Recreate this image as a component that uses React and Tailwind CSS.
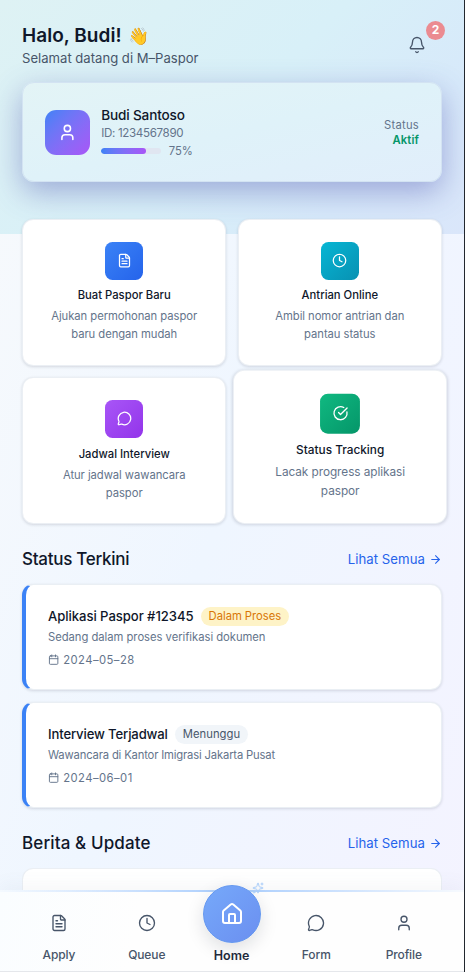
import {
  ArrowRight, Bell, Calendar, CircleCheckBig, Clock, FileText, House, MessageCircle, Sparkles, User,
} from 'lucide-react';

const actions = [
  { title: 'Buat Paspor Baru', lines: ['Ajukan permohonan paspor', 'baru dengan mudah'], icon: FileText, tile: 'from-[#3b82f6] to-[#2563eb]', card: '', gap: 'mt-[7px]' },
  { title: 'Antrian Online', lines: ['Ambil nomor antrian dan', 'pantau status'], icon: Clock, tile: 'from-[#06b6d4] to-[#0891b2]', card: '', gap: 'mt-[7px]' },
  { title: 'Jadwal Interview', lines: ['Atur jadwal wawancara', 'paspor'], icon: MessageCircle, tile: 'from-[#a855f7] to-[#9333ea]', card: '', gap: 'mt-[8px]' },
  { title: 'Status Tracking', lines: ['Lacak progress aplikasi', 'paspor'], icon: CircleCheckBig, tile: 'from-[#10b981] to-[#059669]', card: '-translate-y-[3.75px] scale-105', gap: 'mt-[7px]' },
];

const updates = [
  { title: 'Aplikasi Paspor #12345', titleStyle: 'tracking-[-0.004em]', badge: 'Dalam Proses', badgeStyle: 'bg-[#fef3c7] text-[#d97706] tracking-[-0.003em]', text: 'Sedang dalam proses verifikasi dokumen', textStyle: 'tracking-[-0.003em]', date: '2024–05–28' },
  { title: 'Interview Terjadwal', titleStyle: 'tracking-[-0.01em]', badge: 'Menunggu', badgeStyle: 'bg-[#f1f5f9] text-[#475569] tracking-[0.002em]', text: 'Wawancara di Kantor Imigrasi Jakarta Pusat', textStyle: 'tracking-[-0.015em]', date: '2024–06–01' },
];

function ActionCard({ item }) {
  const Icon = item.icon;
  return (
    <div className={`flex h-[146.5px] flex-col items-center rounded-[11.25px] border border-[#e2e8f0]/70 bg-white pt-[22px] shadow-[0_1px_3px_rgba(15,23,42,0.14)] ${item.card}`}>
      <div className={`flex size-[37.5px] items-center justify-center rounded-[7.5px] bg-linear-to-br ${item.tile}`}>
        <Icon className="size-[15px] text-white" strokeWidth={2} />
      </div>
      <h3 className={`text-[11.25px] leading-[17px] font-[450] text-[#0f172a] ${item.gap}`}>{item.title}</h3>
      <p className="mt-[3px] text-center text-[11.25px] leading-[18.3px] tracking-[-0.005em] text-[#64748b]">
        {item.lines[0]}<br />{item.lines[1]}
      </p>
    </div>
  );
}

function SectionHeader({ title, titleStyle }) {
  return (
    <div className="flex h-[27px] items-center justify-between">
      <h2 className={`text-[17px] font-medium text-[#0f172a] ${titleStyle}`}>{title}</h2>
      <button className="flex items-center gap-[4px] text-[13.2px] tracking-[0.004em] text-[#2563eb]">
        Lihat Semua <ArrowRight className="size-[13px]" />
      </button>
    </div>
  );
}

function UpdateCard({ item }) {
  return (
    <div className="h-[106px] rounded-[11.25px] border border-l-4 border-[#e2e8f0]/70 border-l-[#3b82f6] bg-white pt-[21px] pl-[22px] shadow-[0_1px_3px_rgba(15,23,42,0.14)]">
      <div className="flex h-[21px] items-center gap-[7.5px]">
        <h3 className={`text-[13.1px] font-[470] text-[#0f172a] ${item.titleStyle}`}>{item.title}</h3>
        <span className={`flex h-[18.5px] items-center rounded-full px-[7.5px] text-[11.25px] ${item.badgeStyle}`}>{item.badge}</span>
      </div>
      <p className={`mt-[2px] text-[11.25px] leading-[17px] text-[#64748b] ${item.textStyle}`}>{item.text}</p>
      <div className="mt-[6px] flex items-center gap-[4px] text-[11.25px] leading-[17px] tracking-[0.04em] text-[#64748b]">
        <Calendar className="-mt-px size-[11.25px]" />{item.date}
      </div>
    </div>
  );
}

function NavItem({ icon: Icon, label, width }) {
  return (
    <button className={`flex flex-col items-center text-[#475569] ${width}`}>
      <Icon className="mt-[24px] size-[18px]" strokeWidth={1.8} />
      <span className="mt-[14px] text-[12px] leading-[18px] font-medium tracking-[-0.01em]">{label}</span>
    </button>
  );
}

export default function App() {
  return (
    <div className="relative h-[972px] w-[465px] overflow-hidden border-r border-[#22272e] bg-[linear-gradient(112deg,#f8fafc_0%,#eff6ff_50%,#f4f3ff_100%)] font-[Inter,sans-serif]">
      <header className="h-[234px] bg-[linear-gradient(135deg,#def2f4_0%,#d8f0f8_50%,#d7e9fa_78%,#dae6fa_100%)] px-[22px] pt-[22px]">
        <div className="flex h-[60px] justify-between">
          <div>
            <h1 className="flex items-center gap-[6px] pt-px text-[19px] leading-[26px] font-semibold tracking-[0.002em] text-[#0f172a]">Halo, Budi! <span className="text-[17px]">👋</span></h1>
            <p className="text-[13.1px] leading-[18px] text-[#475569]">Selamat datang di M–Paspor</p>
          </div>
          <button className="relative mt-[14px] mr-[16px] size-[18px] text-[#475569]">
            <Bell className="size-[18px]" strokeWidth={1.8} />
            <span className="absolute -top-[15px] -right-[19px] flex size-[18.75px] items-center justify-center rounded-full bg-[#eb8b91] text-[12px] font-bold text-white">2</span>
          </button>
        </div>
        <section className="flex h-[100px] w-[420px] items-center rounded-[12px] border border-[#d3e3f2] bg-linear-to-br from-[#e3f4f6] via-[#dff2f9] to-[#e1eefb] px-[22px] shadow-[0_10px_30px_rgba(79,84,175,0.44)]">
          <div className="flex size-[45px] items-center justify-center rounded-[11.25px] bg-linear-to-br from-[#3b82f6] to-[#a855f7]">
            <User className="size-[18.75px] text-white" strokeWidth={2} />
          </div>
          <div className="ml-[11.25px] flex-1 pt-[2px]">
            <h2 className="text-[13.6px] leading-[18px] font-medium tracking-[-0.012em] text-[#0f172a]">Budi Santoso</h2>
            <p className="text-[11.6px] leading-[18px] tracking-[-0.03em] text-[#64748b]">ID: 1234567890</p>
            <div className="flex h-[18px] items-center">
              <div className="h-[5.6px] w-[60px] overflow-hidden rounded-full bg-[#e0e6f1]">
                <div className="h-full w-3/4 rounded-full bg-linear-to-r from-[#3b82f6] to-[#a855f7]" />
              </div>
              <span className="ml-[7.5px] text-[11.25px] text-[#64748b]">75%</span>
            </div>
          </div>
          <div className="pt-px text-right text-[11.25px] leading-[15px]">
            <p className="tracking-[0.02em] text-[#64748b]">Status</p>
            <p className="font-semibold tracking-[0.01em] text-[#059669]">Aktif</p>
          </div>
        </section>
      </header>

      <main className="relative -mt-[15px] px-[22px]">
        <div className="grid w-[420px] grid-cols-2 gap-x-[11.25px] gap-y-[11.5px]">
          {actions.map((item) => <ActionCard key={item.title} item={item} />)}
        </div>
        <div className="mt-[22.5px] w-[420px]">
          <SectionHeader title="Status Terkini" titleStyle="tracking-[-0.016em]" />
          <div className="mt-[11px] flex flex-col gap-[12px]">
            {updates.map((item) => <UpdateCard key={item.title} item={item} />)}
          </div>
        </div>
        <div className="mt-[22px] w-[420px]">
          <SectionHeader title="Berita & Update" titleStyle="tracking-[0.007em]" />
          <div className="mt-[11px] h-[106px] rounded-[11.25px] border border-[#e2e8f0]/70 bg-white" />
        </div>
      </main>

      <nav className="absolute inset-x-0 bottom-0 h-[82px] border-b border-[#e5e7eb] bg-[linear-gradient(100deg,#fafdff,#fefefe_30%,#fefefe)] shadow-[0_-6px_16px_rgba(100,116,139,0.05)]">
        <div className="h-[2px] bg-linear-to-r from-[#dbeafe]/20 via-[#a9cdfd] to-[#dbeafe]/20" />
        <div className="-mt-[2px] flex pl-[15px]">
          <NavItem icon={FileText} label="Apply" width="w-[88px]" />
          <NavItem icon={Clock} label="Queue" width="w-[87.5px]" />
          <button className="relative -mt-[5px] flex w-[82px] flex-col items-center">
            <span className="flex size-[58px] items-center justify-center rounded-full border border-[#6598ef] bg-linear-to-br from-[#76a9fa] to-[#6b8ff0] shadow-[0_6px_18px_rgba(15,23,42,0.13)]">
              <House className="size-[24px] text-white" strokeWidth={2} />
            </span>
            <Sparkles className="absolute -top-[3px] right-[9px] size-[12px] text-[#a9cdf9]" />
            <span className="mt-[4px] text-[12.5px] leading-[18px] font-semibold text-[#1e293b]">Home</span>
          </button>
          <NavItem icon={MessageCircle} label="Form" width="w-[87.5px]" />
          <NavItem icon={User} label="Profile" width="w-[87.5px]" />
        </div>
      </nav>
    </div>
  );
}
